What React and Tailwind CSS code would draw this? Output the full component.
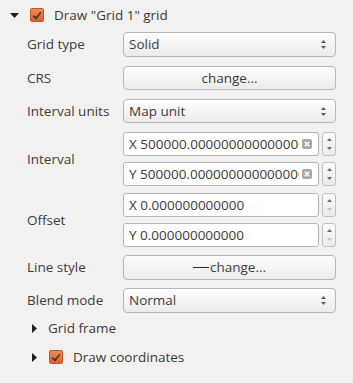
import React from 'react';

const ComboArrows = () => (
    <svg width="7" height="11" viewBox="0 0 7 11" className="shrink-0">
        <path d="M3.5 1 L6 4 L1 4 Z" fill="#5a5a5a" />
        <path d="M3.5 10 L6 7 L1 7 Z" fill="#5a5a5a" />
    </svg>
);

function Combo({ value, h = 'h-[25px]' }) {
    return (
        <div className={`w-[213px] ${h} flex items-center justify-between pl-[5px] pr-[8px] rounded-[4px] border border-[#b9b7b5] bg-gradient-to-b from-[#fdfdfd] to-[#ecebea] shadow-[inset_0_1px_0_#fff]`}>
            <span>{value}</span>
            <ComboArrows />
        </div>
    );
}

function Button({ children, h = 'h-[24px]' }) {
    return (
        <div className={`w-[213px] ${h} flex items-center justify-center rounded-[4px] border border-[#b9b7b5] bg-gradient-to-b from-[#fdfdfd] to-[#ecebea]`}>
            {children}
        </div>
    );
}

function ClearIcon() {
    return (
        <svg width="10" height="10" viewBox="0 0 10 10" className="shrink-0">
            <rect x="0" y="0" width="10" height="10" rx="2" fill="#a9a9a9" />
            <path d="M2.8 2.8 L7.2 7.2 M7.2 2.8 L2.8 7.2" stroke="#fff" strokeWidth="1.6" />
        </svg>
    );
}

function SpinBox({ value, clear, dimDown }) {
    return (
        <div className="flex items-center h-[24px] w-[213px]">
            <div className="w-[196px] h-full flex items-center rounded-[3px] border border-[#b9b7b5] bg-white pl-[5px] pr-[6px]">
                <span className="flex-1 overflow-hidden whitespace-nowrap mr-[3px]">{value}</span>
                {clear && <ClearIcon />}
            </div>
            <div className="ml-[3px] w-[14px] h-full flex flex-col items-center justify-center gap-[6px] rounded-[3px] border border-[#c3c1bf] bg-gradient-to-b from-[#fbfbfb] to-[#ecebea]">
                <svg width="5" height="3" viewBox="0 0 5 3"><path d="M2.5 0 L5 3 L0 3 Z" fill="#6a6a6a" /></svg>
                <svg width="5" height="3" viewBox="0 0 5 3"><path d="M2.5 3 L5 0 L0 0 Z" fill={dimDown ? '#c4c4c4' : '#6a6a6a'} /></svg>
            </div>
        </div>
    );
}

function Check() {
    return (
        <div className="w-[14px] h-[14px] rounded-[2px] border border-[#c4541f] bg-gradient-to-b from-[#f08a55] to-[#e0622c] flex items-center justify-center">
            <svg width="10" height="9" viewBox="0 0 10 9">
                <path d="M1.3 4.6 L4 7.4 L8.8 1.2" fill="none" stroke="#3d3a38" strokeWidth="1.8" />
            </svg>
        </div>
    );
}

const TriDown = () => (
    <svg width="9" height="5" viewBox="0 0 9 5"><path d="M0 0 L9 0 L4.5 5 Z" fill="#1e1e1e" /></svg>
);
const TriRight = () => (
    <svg width="5" height="9" viewBox="0 0 5 9"><path d="M0 0 L5 4.5 L0 9 Z" fill="#1e1e1e" /></svg>
);

function Row({ label, children, className = '' }) {
    return (
        <div className={`flex items-center ${className}`}>
            <div className="w-[96px] shrink-0">{label}</div>
            {children}
        </div>
    );
}

export default function App() {
    return (
        <div className="w-[353px] h-[383px] bg-[#f2f1f0] text-[#3c3c3c] text-[13.5px] font-['Open_Sans',sans-serif] overflow-hidden">
            {/* Group header */}
            <div className="h-[30px] flex items-center pl-[10px]">
                <TriDown />
                <div className="ml-[11px]"><Check /></div>
                <span className="ml-[10px]">Draw "Grid 1" grid</span>
            </div>

            <div className="pl-[27px] flex flex-col">
                <Row label="Grid type" className="mt-[2px]">
                    <Combo value="Solid" />
                </Row>
                <Row label="CRS" className="mt-[9px]">
                    <Button>change...</Button>
                </Row>
                <Row label="Interval units" className="mt-[9px]">
                    <Combo value="Map unit" h="h-[24px]" />
                </Row>
                <Row label="Interval" className="mt-[9px]">
                    <div className="flex flex-col gap-[6px]">
                        <SpinBox value="X 500000.000000000000000" clear />
                        <SpinBox value="Y 500000.000000000000000" clear />
                    </div>
                </Row>
                <Row label="Offset" className="mt-[7px]">
                    <div className="flex flex-col gap-[6px]">
                        <SpinBox value="X 0.000000000000" dimDown />
                        <SpinBox value="Y 0.000000000000" dimDown />
                    </div>
                </Row>
                <Row label="Line style" className="mt-[8px]">
                    <Button h="h-[25px]">
                        <span className="inline-block w-[16px] h-px bg-[#2a2a2a] mr-[1px]" />
                        <span>change...</span>
                    </Button>
                </Row>
                <Row label="Blend mode" className="mt-[8px]">
                    <Combo value="Normal" />
                </Row>
            </div>

            <div className="h-[30px] flex items-center pl-[32px]">
                <TriRight />
                <span className="ml-[11px]">Grid frame</span>
            </div>
            <div className="h-[28px] flex items-center pl-[32px]">
                <TriRight />
                <div className="ml-[12px]"><Check /></div>
                <span className="ml-[10px]">Draw coordinates</span>
            </div>
        </div>
    );
}
